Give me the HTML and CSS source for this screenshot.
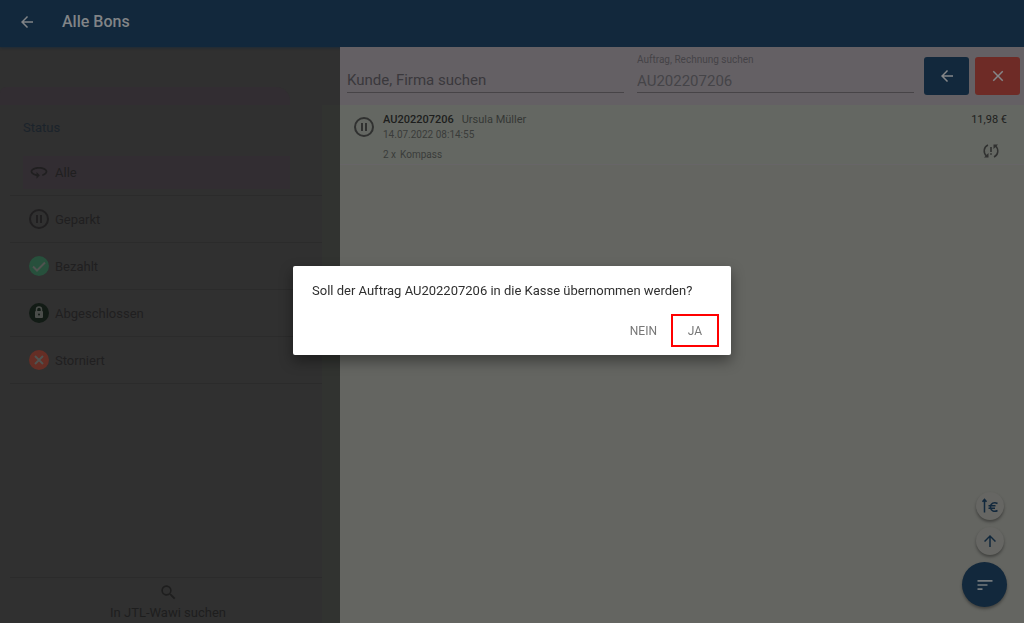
FILE: index.html
```html
<!DOCTYPE html>
<html lang="de">
<head>
    <meta charset="UTF-8">
    <meta name="viewport" content="width=device-width, initial-scale=1.0">
    <title>Alle Bons</title>
    <link rel="stylesheet" href="styles.css">
</head>
<body>
<div class="app">
    <header class="topbar">
        <button class="icon-btn" type="button" aria-label="Zurück">
            <svg width="18" height="18" viewBox="0 0 24 24"><path d="M20 11H7.8l5.6-5.6L12 4l-8 8 8 8 1.4-1.4L7.8 13H20z"/></svg>
        </button>
        <h1>Alle Bons</h1>
    </header>

    <div class="content">
        <aside class="sidebar">
            <div class="sidebar-head"><div class="sidebar-tab"></div></div>
            <div class="sidebar-body">
                <h2>Status</h2>
                <nav class="status-list">
                    <a class="status active" href="#alle">
                        <svg width="20" height="20" viewBox="0 0 24 24"><path d="M12 6C6.500 6 2 8.200 2 11.500c0 2.500 3 4.600 7 5.300V20l4-4-4-4v2.800c-3.100-.6-5-2-5-3.300C4 9.800 7.400 8 12 8s8 1.800 8 3.500c0 1.300-1.600 2.600-4 3.200v2c3.500-.7 6-2.700 6-5.200C22 8.200 17.500 6 12 6z"/></svg>
                        <span>Alle</span>
                    </a>
                    <a class="status" href="#geparkt">
                        <svg width="20" height="20" viewBox="0 0 20 20"><circle class="ring" cx="10" cy="10" r="9"/><path d="M7 6h2v8H7zM11 6h2v8h-2z"/></svg>
                        <span>Geparkt</span>
                    </a>
                    <a class="status" href="#bezahlt">
                        <svg width="20" height="20" viewBox="0 0 20 20"><circle class="green" cx="10" cy="10" r="10"/><path class="mark" d="M4 10.500l4 4 8-8"/></svg>
                        <span>Bezahlt</span>
                    </a>
                    <a class="status" href="#abgeschlossen">
                        <svg width="20" height="20" viewBox="0 0 20 20"><circle class="dark" cx="10" cy="10" r="10"/><path class="shackle" d="M7.500 8.500V6.500a2.500 2.500 0 0 1 5 0v2"/><rect class="lock" x="6" y="8" width="8" height="7" rx="1"/><circle class="dark" cx="10" cy="11.500" r="1"/></svg>
                        <span>Abgeschlossen</span>
                    </a>
                    <a class="status" href="#storniert">
                        <svg width="20" height="20" viewBox="0 0 20 20"><circle class="red" cx="10" cy="10" r="10"/><path class="mark" d="M6 6l8 8M14 6l-8 8"/></svg>
                        <span>Storniert</span>
                    </a>
                </nav>
                <button class="wawi-search" type="button">
                    <svg width="19" height="19" viewBox="0 0 24 24"><path d="M15.500 14h-.8l-.3-.3A6.500 6.500 0 1 0 13.700 14.400l.3.3v.8l5 5 1.500-1.500zm-6 0a4.500 4.500 0 1 1 0-9 4.500 4.500 0 0 1 0 9z"/></svg>
                    <span>In JTL-Wawi suchen</span>
                </button>
            </div>
        </aside>

        <main class="main">
            <form class="searchbar">
                <div class="field">
                    <label class="hidden-label" for="kunde">Kunde, Firma suchen</label>
                    <input id="kunde" type="text" placeholder="Kunde, Firma suchen">
                </div>
                <div class="field">
                    <label for="auftrag">Auftrag, Rechnung suchen</label>
                    <input id="auftrag" class="filled" type="text" value="AU202207206">
                </div>
                <div class="search-actions">
                    <button class="square" type="button" aria-label="Zurück">
                        <svg width="18" height="18" viewBox="0 0 24 24"><path d="M20 11H7.800l5.600-5.600L12 4l-8 8 8 8 1.400-1.400L7.800 13H20z"/></svg>
                    </button>
                    <button class="square cancel" type="button" aria-label="Suche löschen">
                        <svg width="18" height="18" viewBox="0 0 24 24"><path d="M19 6.400L17.600 5 12 10.600 6.400 5 5 6.400l5.600 5.600L5 17.600 6.400 19l5.600-5.600 5.600 5.600 1.400-1.400-5.600-5.600z"/></svg>
                    </button>
                </div>
            </form>

            <article class="bon">
                <svg class="bon-icon" width="20" height="20" viewBox="0 0 20 20"><circle class="ring" cx="10" cy="10" r="9"/><path d="M7 6h2v8H7zM11 6h2v8h-2z"/></svg>
                <div class="bon-info">
                    <p class="bon-title"><strong>AU202207206</strong><span>Ursula Müller</span></p>
                    <p class="bon-date">14.07.2022 08:14:55</p>
                    <p class="bon-items"><span>2 x</span><span>Kompass</span></p>
                </div>
                <div class="bon-right">
                    <span>11,98 €</span>
                    <svg width="18" height="18" viewBox="0 0 18 18"><path class="line" d="M6 3C1.500 5 1 11 4.500 14M12 15c4.500-2 5-8 1.500-11"/><path d="M2 15.500h4.500V11zM16 2.500h-4.500V7zM8.200 5h1.600v5H8.200zM8.200 11.200h1.600v1.600H8.200z"/></svg>
                </div>
            </article>

            <div class="fabs">
                <button class="fab-small" type="button" aria-label="Nach Betrag sortieren">
                    <svg width="18" height="18" viewBox="0 0 18 18"><path class="line" d="M3.500 15.500V3M1.500 4.800l2-2.300 2 2.300M16.500 6.500C13 4.500 9.500 6.500 9.500 10s3.500 5.500 7 3.500M7.500 8.800h7M7.500 11.300h6.500"/></svg>
                </button>
                <button class="fab-small" type="button" aria-label="Aufsteigend">
                    <svg width="18" height="18" viewBox="0 0 24 24"><path d="M11 20V7.800l-5.600 5.600L4 12l8-8 8 8-1.400 1.400L13 7.800V20z"/></svg>
                </button>
                <button class="fab" type="button" aria-label="Sortierung">
                    <svg width="20" height="20" viewBox="0 0 24 24"><path d="M3 6h18v2H3zM3 11h12v2H3zM3 16h6v2H3z"/></svg>
                </button>
            </div>
        </main>
    </div>
</div>

<div class="overlay">
    <div class="dialog" role="dialog" aria-modal="true" aria-labelledby="frage">
        <p id="frage">Soll der Auftrag AU202207206 in die Kasse übernommen werden?</p>
        <div class="dialog-actions">
            <button type="button">NEIN</button>
            <button class="highlight" type="button">JA</button>
        </div>
    </div>
</div>
</body>
</html>
```
FILE: styles.css
```css
* {
    box-sizing: border-box;
}
body {
    margin: 0;
    font-family: Roboto, "Liberation Sans", sans-serif;
    background-color: #646561;
}
h1, h2, p {
    margin: 0;
    font-weight: normal;
}
button, input {
    font-family: inherit;
    border: none;
    padding: 0;
    background: none;
}
svg {
    display: block;
    flex-shrink: 0;
    fill: currentColor;
}
.app {
    display: flex;
    flex-direction: column;
    height: 100vh;
}
.topbar {
    position: relative;
    display: flex;
    align-items: center;
    gap: 26px;
    height: 47px;
    padding: 0 18px 4px;
    background-color: #12283c;
    color: #818487;
    box-shadow: 0 1px 2px rgba(18,40,60,0.6);
}
.topbar h1 {
    font-size: 16px;
    font-weight: 500;
}
.icon-btn {
    color: inherit;
}
.content {
    display: flex;
    flex: 1;
    min-height: 0;
}

/* sidebar */
.sidebar {
    display: flex;
    flex-direction: column;
    width: 340px;
    background-color: #303030;
    color: #1e1e1e;
}
.sidebar-head {
    display: flex;
    align-items: flex-end;
    height: 58px;
}
.sidebar-tab {
    width: 290px;
    height: 18px;
    background-color: #322d32;
    border-radius: 6px 14px 0 0;
}
.sidebar-body {
    display: flex;
    flex-direction: column;
    flex: 1;
    padding-left: 10px;
    border-right: 18px solid #313330;
}
.sidebar h2 {
    padding: 14px 13px 12px;
    font-size: 13px;
    line-height: 18px;
    color: #1b232b;
}
.status-list {
    display: flex;
    flex-direction: column;
}
.status {
    display: flex;
    align-items: center;
    gap: 6px;
    height: 47px;
    padding-left: 19px;
    border-bottom: 1px solid #2b2b2b;
    font-size: 13px;
    color: #201f20;
    text-decoration: none;
}
.status.active {
    background: linear-gradient(#322d32, #322d32) 13px 7px / 267px 33px no-repeat;
}
.ring {
    fill: none;
    stroke: currentColor;
    stroke-width: 2;
}
.green {
    fill: #27503c;
}
.dark {
    fill: #121b15;
}
.red {
    fill: #652e25;
}
.mark {
    fill: none;
    stroke: #505350;
    stroke-width: 2;
}
.shackle {
    fill: none;
    stroke: #4a4d4a;
    stroke-width: 1.5;
}
.lock {
    fill: #4a4d4a;
}
.wawi-search {
    display: flex;
    flex-direction: column;
    align-items: center;
    gap: 2px;
    margin-top: auto;
    padding: 5px 0 1px 4px;
    border-top: 1px solid #2b2b2b;
    font-size: 13px;
    line-height: 18px;
    color: #1e1e1e;
}

/* receipts */
.main {
    position: relative;
    flex: 1;
}
.searchbar {
    display: flex;
    gap: 13px;
    height: 58px;
    padding: 7px 4px 0 7px;
    background-color: #646064;
}
.field {
    display: flex;
    flex-direction: column;
    flex: 1;
    min-width: 0;
}
.field label {
    font-size: 10px;
    line-height: 12px;
    color: #454347;
}
.field .hidden-label {
    visibility: hidden;
}
.field input {
    width: 100%;
    height: 27px;
    padding-top: 2px;
    border-bottom: 1px solid #474447;
    font-size: 15px;
    color: #3e3c40;
}
.field input::placeholder {
    color: #3a383c;
    opacity: 1;
}
.field input.filled {
    padding-top: 3px;
    color: #454448;
}
.search-actions {
    display: flex;
    gap: 6px;
    padding-top: 3px;
    margin-left: -3px;
}
.square {
    display: flex;
    align-items: center;
    justify-content: center;
    width: 45px;
    height: 38px;
    border-radius: 3px;
    background-color: #12283c;
    color: #858789;
}
.square.cancel {
    background-color: #6e2b26;
}
.bon {
    display: flex;
    height: 60px;
    padding: 8px 17px 0 14px;
    background-color: #646762;
    border-bottom: 1px solid #676567;
    color: #303130;
}
.bon-icon {
    margin: 4px 9px 0 0;
}
.bon-info {
    flex: 1;
}
.bon-title {
    display: flex;
    gap: 8px;
    font-size: 11px;
    line-height: 14px;
    color: #353735;
}
.bon-title strong {
    font-weight: 500;
    color: #1d1e1d;
}
.bon-date {
    font-size: 10px;
    line-height: 15px;
    color: #3a3c3a;
}
.bon-items {
    display: flex;
    gap: 4px;
    padding-top: 6px;
    font-size: 10px;
    line-height: 14px;
    color: #3a3c3a;
}
.bon-right {
    display: flex;
    flex-direction: column;
    align-items: flex-end;
    gap: 15px;
    font-size: 11px;
    line-height: 14px;
    color: #1d1e1d;
}
.bon-right svg {
    margin-right: 7px;
    color: #303130;
}
.fabs {
    position: absolute;
    right: 17px;
    bottom: 16px;
    display: flex;
    flex-direction: column;
    align-items: flex-end;
    gap: 7px;
}
.fabs button {
    display: flex;
    align-items: center;
    justify-content: center;
    border-radius: 50%;
    box-shadow: 0 2px 3px rgba(0,0,0,0.35);
}
.fabs .fab-small {
    width: 28px;
    height: 28px;
    margin-right: 3px;
    background-color: #666663;
    color: #12283c;
}
.fabs .fab {
    width: 45px;
    height: 45px;
    background-color: #12283c;
    color: #74797c;
}
.line {
    fill: none;
    stroke: currentColor;
    stroke-width: 1.5;
}

/* confirm dialog */
.overlay {
    position: fixed;
    inset: 0;
    display: flex;
    align-items: center;
    justify-content: center;
    padding-bottom: 2px;
}
.dialog {
    width: 438px;
    max-width: 90%;
    padding: 16px 12px 8px 19px;
    background-color: #fff;
    border-radius: 2px;
    box-shadow: 0 6px 14px rgba(0,0,0,0.4);
}
.dialog p {
    font-size: 13px;
    line-height: 18px;
    color: #2f2f2f;
}
.dialog-actions {
    display: flex;
    justify-content: flex-end;
    padding-top: 14px;
}
.dialog-actions button {
    min-width: 48px;
    height: 33px;
    padding: 0 14px;
    font-size: 12px;
    color: #777;
}
.dialog-actions .highlight {
    border: 2px solid #f00;
}
```
